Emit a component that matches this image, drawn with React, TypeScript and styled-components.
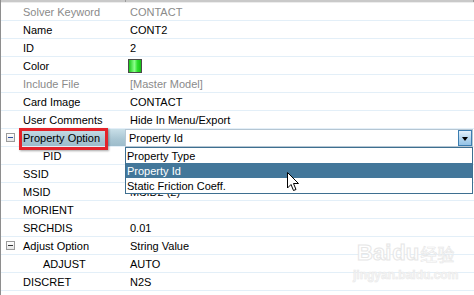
import React from "react";
import styled, { createGlobalStyle } from "styled-components";

const GlobalStyle = createGlobalStyle`
  html, body { margin: 0; padding: 0; background: #ffffff; }
  body { font-family: "Liberation Sans", Arial, sans-serif; font-size: 11px; }
`;

const Panel = styled.div`
  position: relative;
  width: 473px;
  height: 295px;
  overflow: hidden;
  background: #ffffff;
  border-left: 1px solid #8e8e8e;
`;

const HeaderStrip = styled.div`
  height: 2px;
  background: #c9c9c9;
  border-bottom: 1px solid #ececec;
  display: grid;
  grid-template-columns: 124px 1px 1fr 1px;
`;

const HeaderDivider = styled.div<{ $tone: string }>`
  grid-column: ${(p) => (p.$tone === "mid" ? 2 : 4)};
  background: #9a9a9a;
`;

const Row = styled.div`
  display: grid;
  grid-template-columns: 21px 104px 1fr;
  height: 17px;
  border-bottom: 1px solid #e3eff8;
  align-items: stretch;
`;

const ExpanderCell = styled.div`
  display: flex;
  align-items: center;
  justify-content: flex-start;
  padding-left: 5px;
`;

const ExpanderBox = styled.div<{ $active?: boolean }>`
  width: 7px;
  height: 7px;
  border: 1px solid #9b9b9b;
  background: linear-gradient(#ffffff, #e6e6e6);
  display: flex;
  align-items: center;
  justify-content: center;
  &::after {
    content: "";
    width: 5px;
    height: 1px;
    background: ${(p) => (p.$active ? "#2c4f9e" : "#333333")};
  }
`;

const LabelCell = styled.div<{ $gray?: boolean; $indent?: boolean; $selected?: boolean }>`
  position: relative;
  display: flex;
  align-items: center;
  padding-left: ${(p) => (p.$indent ? "21px" : "1px")};
  color: ${(p) => (p.$gray ? "#8a8a8a" : "#000000")};
  white-space: nowrap;
  background: ${(p) =>
    p.$selected ? "linear-gradient(#c9dfe8, #a9c6d3 60%, #9dbccb)" : "transparent"};
`;

const ValueCell = styled.div<{ $gray?: boolean }>`
  position: relative;
  display: flex;
  align-items: center;
  padding-left: 4px;
  color: ${(p) => (p.$gray ? "#8a8a8a" : "#000000")};
  white-space: nowrap;
`;

const Swatch = styled.div`
  width: 12px;
  height: 12px;
  margin-left: -2px;
  border: 1px solid #4a4a4a;
  background: linear-gradient(to right, #18c818, #8cff8c 45%, #2ee02e 70%, #16c016);
`;

const Annotation = styled.div`
  position: absolute;
  left: -3px;
  top: -1px;
  width: 83px;
  height: 16px;
  border: 3px solid #e3232a;
  box-shadow: 1px 1px 2px rgba(0, 0, 0, 0.35);
  pointer-events: none;
`;

const Combo = styled.div`
  position: relative;
  z-index: 2;
  display: flex;
  align-items: center;
  height: 16px;
  margin: 0 0 -1px -5px;
  width: 346px;
  border: 1px solid #b5c6d3;
  background: #ffffff;
`;

const ComboText = styled.div`
  flex: 1;
  padding-left: 3px;
`;

const ComboButton = styled.div`
  width: 12px;
  height: 14px;
  margin-right: 0px;
  border: 1px solid #3c7db0;
  background: linear-gradient(#e4f1fb, #b3d5ee 55%, #94c3e6);
  display: flex;
  align-items: center;
  justify-content: center;
  &::after {
    content: "";
    border-left: 3.5px solid transparent;
    border-right: 3.5px solid transparent;
    border-top: 4px solid #000000;
    margin-top: 1px;
  }
`;

const DropList = styled.div`
  position: absolute;
  left: -1px;
  top: 17px;
  width: 346px;
  border: 1px solid #3e6f90;
  background: #ffffff;
  display: flex;
  flex-direction: column;
`;

const DropItem = styled.div<{ $selected?: boolean }>`
  height: 15px;
  display: flex;
  align-items: center;
  padding-left: 1px;
  background: ${(p) => (p.$selected ? "#43779a" : "#ffffff")};
  color: ${(p) => (p.$selected ? "#ffffff" : "#000000")};
`;

const Cursor = styled.svg`
  position: absolute;
  left: 286px;
  top: 172px;
  z-index: 5;
`;

const Watermark = styled.div`
  position: absolute;
  left: 352px;
  top: 240px;
  display: flex;
  flex-direction: column;
  align-items: center;
  pointer-events: none;
`;

const WatermarkLogo = styled.div`
  display: flex;
  align-items: flex-end;
  gap: 1px;
  font-family: "Liberation Sans", Arial, sans-serif;
  font-weight: bold;
  font-size: 22px;
  -webkit-text-stroke: 1px #e6e6e6;
  color: #ffffff;
`;

const WatermarkCjk = styled.span`
  font-family: "Noto Sans CJK SC", sans-serif;
  font-size: 17px;
  font-weight: normal;
  -webkit-text-stroke: 0.6px #e6e6e6;
`;

const WatermarkUrl = styled.div`
  font-family: "Liberation Sans", Arial, sans-serif;
  font-size: 12px;
  font-weight: bold;
  color: #f6f6f6;
  -webkit-text-stroke: 0.5px #e8e8e8;
  margin-top: 2px;
`;

type Item = {
  label: string;
  value?: string;
  gray?: boolean;
  indent?: boolean;
  expander?: "active" | "normal";
  swatch?: boolean;
  selected?: boolean;
};

const items: Item[] = [
  { label: "Solver Keyword", value: "CONTACT", gray: true },
  { label: "Name", value: "CONT2" },
  { label: "ID", value: "2" },
  { label: "Color", swatch: true },
  { label: "Include File", value: "[Master Model]", gray: true },
  { label: "Card Image", value: "CONTACT" },
  { label: "User Comments", value: "Hide In Menu/Export" },
  { label: "Property Option", expander: "active", selected: true },
  { label: "PID", indent: true },
  { label: "SSID" },
  { label: "MSID", value: "MSID2 (2)" },
  { label: "MORIENT" },
  { label: "SRCHDIS", value: "0.01" },
  { label: "Adjust Option", value: "String Value", expander: "normal" },
  { label: "ADJUST", value: "AUTO", indent: true },
  { label: "DISCRET", value: "N2S" },
];

const options = ["Property Type", "Property Id", "Static Friction Coeff."];

export default function App() {
  return (
    <>
      <GlobalStyle />
      <Panel>
        <HeaderStrip>
          <HeaderDivider $tone="mid" />
          <HeaderDivider $tone="end" />
        </HeaderStrip>
        {items.map((it) => (
          <Row key={it.label}>
            <ExpanderCell>
              {it.expander && <ExpanderBox $active={it.expander === "active"} />}
            </ExpanderCell>
            <LabelCell $gray={it.gray} $indent={it.indent} $selected={it.selected}>
              {it.label}
              {it.selected && <Annotation />}
            </LabelCell>
            <ValueCell $gray={it.gray}>
              {it.swatch && <Swatch />}
              {it.value}
              {it.selected && (
                <Combo>
                  <ComboText>Property Id</ComboText>
                  <ComboButton />
                  <DropList>
                    {options.map((o) => (
                      <DropItem key={o} $selected={o === "Property Id"}>
                        {o}
                      </DropItem>
                    ))}
                  </DropList>
                </Combo>
              )}
            </ValueCell>
          </Row>
        ))}
        <Cursor width="13" height="20" viewBox="0 0 13 20">
          <path
            d="M0.5 0.5 L0.5 16 L4 12.5 L6.5 18.5 L9 17.5 L6.5 11.5 L11.5 11.5 Z"
            fill="#ffffff"
            stroke="#000000"
            strokeWidth="1"
            strokeLinejoin="miter"
          />
        </Cursor>
        <Watermark>
          <WatermarkLogo>
            Bai
            <span>du</span>
            <WatermarkCjk>经验</WatermarkCjk>
          </WatermarkLogo>
          <WatermarkUrl>jingyan.baidu.com</WatermarkUrl>
        </Watermark>
      </Panel>
    </>
  );
}
